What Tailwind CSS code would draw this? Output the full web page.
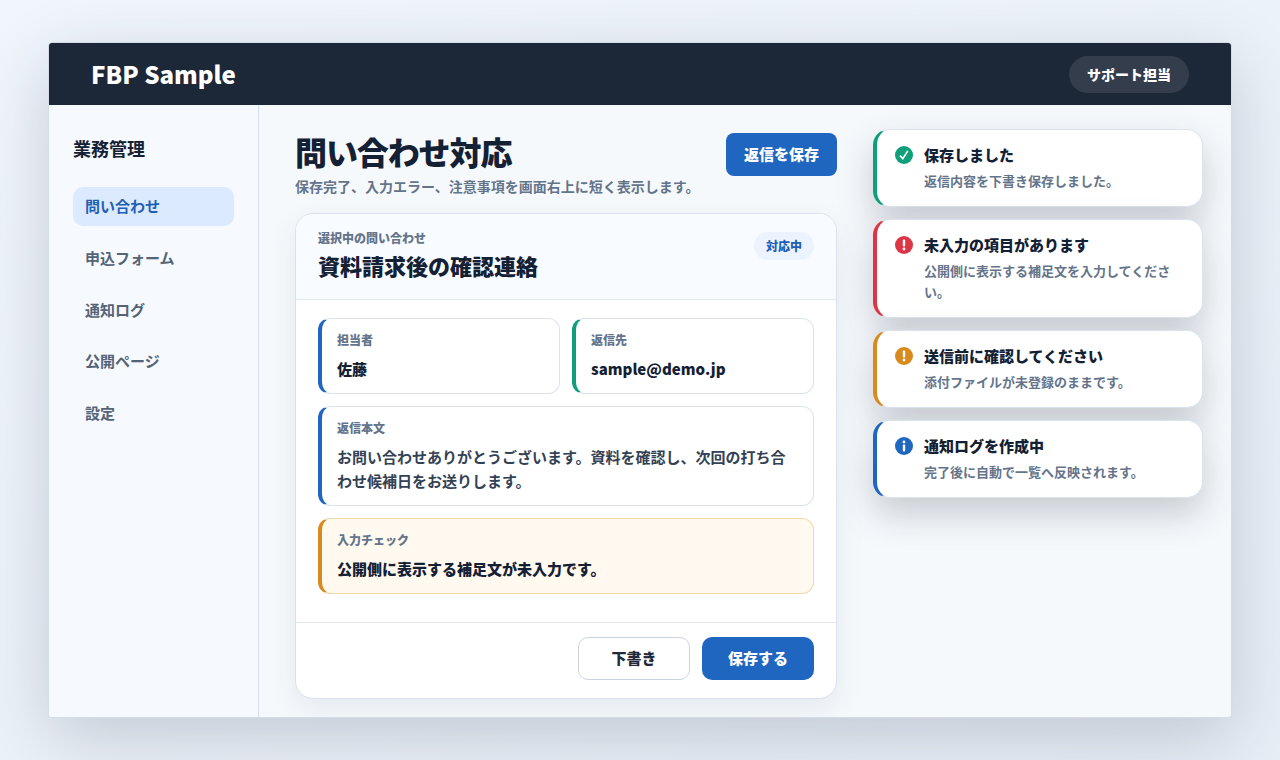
<!DOCTYPE html>
<html lang="ja">
<head>
    <meta charset="UTF-8">
    <meta name="viewport" content="width=device-width, initial-scale=1.0">
    <title>FBP Sample</title>
    <script src="https://cdn.jsdelivr.net/npm/@tailwindcss/browser@4"></script>
</head>
<body class="h-[760px] overflow-hidden bg-gradient-to-br from-[#f1f6fd] to-[#e8eef6] px-12 pt-[42px] font-['Noto_Sans_CJK_JP','Noto_Sans',sans-serif] text-[#142033]">

    <div class="flex h-[676px] flex-col overflow-hidden rounded-[4px] border border-[#d3dce8] bg-[#f6f9fc] shadow-[0_20px_70px_rgba(30,41,59,0.2)]">

        <!-- Header -->
        <header class="flex h-[62px] shrink-0 items-center justify-between bg-[#1c2837] pl-[42px] pr-[42px]">
            <div class="text-2xl font-extrabold leading-none text-white">FBP Sample</div>
            <div class="flex h-[37px] w-[120px] items-center justify-center rounded-full bg-[#333d4c] text-sm font-extrabold text-white">サポート担当</div>
        </header>

        <div class="flex min-h-0 flex-1">

            <!-- Sidebar -->
            <aside class="w-[210px] shrink-0 border-r border-[#d5dfeb] bg-[#f6f9fe] pl-6 pr-6 pt-[29px]">
                <div class="text-lg font-bold leading-[28px]">業務管理</div>
                <nav class="mt-[25px] flex flex-col gap-[12.75px] text-[15px] font-bold leading-6 text-[#556377]">
                    <a class="rounded-[10px] bg-[#dbeafe] px-3 pb-[8px] pt-[7px] text-[#1f5fb5]">問い合わせ</a>
                    <a class="px-3 pb-[8px] pt-[7px]">申込フォーム</a>
                    <a class="px-3 pb-[8px] pt-[7px]">通知ログ</a>
                    <a class="px-3 pb-[8px] pt-[7px]">公開ページ</a>
                    <a class="px-3 pb-[8px] pt-[7px]">設定</a>
                </nav>
            </aside>

            <main class="flex flex-1 gap-9 pl-9 pr-[28px] pt-6">

                <!-- Center column -->
                <section class="flex w-[542px] shrink-0 flex-col">
                    <div class="flex items-start justify-between">
                        <div>
                            <h1 class="text-[32px] font-extrabold leading-[44px] tracking-[-1.1px]">問い合わせ対応</h1>
                            <p class="mt-0.5 text-sm font-bold leading-[22px] text-[#64748b]">保存完了、入力エラー、注意事項を画面右上に短く表示します。</p>
                        </div>
                        <button class="mt-1 h-[43px] w-[111px] rounded-lg bg-[#1f66c1] text-[15px] font-extrabold text-white">返信を保存</button>
                    </div>

                    <div class="mt-4 flex h-[486px] flex-col overflow-hidden rounded-[18px] border border-[#d9e2ee] bg-white shadow-[0_10px_30px_rgba(30,41,59,0.08)]">
                        <div class="flex h-[86px] shrink-0 items-start justify-between border-b border-[#dfe7f1] bg-[#f8fbff] px-[22px] pt-[15px]">
                            <div>
                                <div class="text-xs font-extrabold leading-[18px] text-[#64748b]">選択中の問い合わせ</div>
                                <div class="mt-0.5 text-[22px] font-extrabold leading-[33px]">資料請求後の確認連絡</div>
                            </div>
                            <span class="mt-[3px] flex h-7 w-[60px] items-center justify-center rounded-full bg-[#ecf3fe] text-xs font-extrabold text-[#1f5fb5]">対応中</span>
                        </div>

                        <div class="flex flex-1 flex-col gap-3 px-[22px] pt-[18px]">
                            <div class="grid grid-cols-2 gap-3">
                                <div class="rounded-xl border border-l-4 border-[#d9e2ee] border-l-[#1f66c1] px-[15px] py-3">
                                    <div class="text-xs font-extrabold leading-[18px] text-[#64748b]">担当者</div>
                                    <div class="mt-2 text-[15px] font-extrabold leading-6">佐藤</div>
                                </div>
                                <div class="rounded-xl border border-l-4 border-[#d9e2ee] border-l-[#0f9f7a] px-[15px] py-3">
                                    <div class="text-xs font-extrabold leading-[18px] text-[#64748b]">返信先</div>
                                    <div class="mt-2 text-[15px] font-extrabold leading-6">sample@demo.jp</div>
                                </div>
                            </div>
                            <div class="rounded-xl border border-l-4 border-[#d9e2ee] border-l-[#1f66c1] px-[15px] py-3">
                                <div class="text-xs font-extrabold leading-[18px] text-[#64748b]">返信本文</div>
                                <div class="mt-2 text-[15px] font-bold leading-6 text-[#334155]">お問い合わせありがとうございます。資料を確認し、次回の打ち合わせ候補日をお送りします。</div>
                            </div>
                            <div class="rounded-xl border border-l-4 border-[#ecd8a8] border-l-[#d98a1f] bg-[#fff9ef] px-[15px] py-3">
                                <div class="text-xs font-extrabold leading-[18px] text-[#64748b]">入力チェック</div>
                                <div class="mt-2 text-[15px] font-extrabold leading-6">公開側に表示する補足文が未入力です。</div>
                            </div>
                        </div>

                        <div class="flex h-[76px] shrink-0 justify-end gap-3 border-t border-[#dfe7f1] px-[22px] pt-[14px]">
                            <button class="h-[43px] w-[112px] rounded-[10px] border border-[#cbd5e1] bg-white text-[15px] font-extrabold text-[#1f2a3c]">下書き</button>
                            <button class="h-[43px] w-[112px] rounded-[10px] bg-[#1f66c1] text-[15px] font-extrabold text-white">保存する</button>
                        </div>
                    </div>
                </section>

                <!-- Toasts -->
                <section class="flex flex-1 flex-col gap-3">
                    <div class="flex gap-[11px] rounded-2xl border border-l-4 border-[#dbe3ee] border-l-[#0f9f7a] bg-white pb-[14.2px] pl-[18px] pr-4 pt-[14px] shadow-[0_16px_36px_rgba(30,41,59,0.22)]">
                        <svg class="mt-[2px] h-[18px] w-[18px] shrink-0" viewBox="0 0 18 18"><circle cx="9" cy="9" r="9" fill="#0f9f7a"/><path d="M5 9.6 7.8 12.6 12.8 4.9" fill="none" stroke="#fff" stroke-width="1.7"/></svg>
                        <div>
                            <div class="text-[15px] font-extrabold leading-[22.5px]">保存しました</div>
                            <div class="mt-[4.5px] text-[13px] font-bold leading-[20.8px] text-[#64748b]">返信内容を下書き保存しました。</div>
                        </div>
                    </div>
                    <div class="flex gap-[11px] rounded-2xl border border-l-4 border-[#dbe3ee] border-l-[#dc3545] bg-white pb-[14.2px] pl-[18px] pr-4 pt-[14px] shadow-[0_16px_36px_rgba(30,41,59,0.22)]">
                        <svg class="mt-[2px] h-[18px] w-[18px] shrink-0" viewBox="0 0 18 18"><circle cx="9" cy="9" r="9" fill="#dc3545"/><rect x="7.8" y="3.6" width="2.4" height="7" rx="1" fill="#fff"/><circle cx="9" cy="13" r="1.4" fill="#fff"/></svg>
                        <div>
                            <div class="text-[15px] font-extrabold leading-[22.5px]">未入力の項目があります</div>
                            <div class="mt-[4.5px] text-[13px] font-bold leading-[20.8px] text-[#64748b]">公開側に表示する補足文を入力してください。</div>
                        </div>
                    </div>
                    <div class="flex gap-[11px] rounded-2xl border border-l-4 border-[#dbe3ee] border-l-[#d98a1f] bg-white pb-[14.2px] pl-[18px] pr-4 pt-[14px] shadow-[0_16px_36px_rgba(30,41,59,0.22)]">
                        <svg class="mt-[2px] h-[18px] w-[18px] shrink-0" viewBox="0 0 18 18"><circle cx="9" cy="9" r="9" fill="#d98a1f"/><rect x="7.8" y="3.6" width="2.4" height="7" rx="1" fill="#fff"/><circle cx="9" cy="13" r="1.4" fill="#fff"/></svg>
                        <div>
                            <div class="text-[15px] font-extrabold leading-[22.5px]">送信前に確認してください</div>
                            <div class="mt-[4.5px] text-[13px] font-bold leading-[20.8px] text-[#64748b]">添付ファイルが未登録のままです。</div>
                        </div>
                    </div>
                    <div class="flex gap-[11px] rounded-2xl border border-l-4 border-[#dbe3ee] border-l-[#1f66c1] bg-white pb-[14.2px] pl-[18px] pr-4 pt-[14px] shadow-[0_16px_36px_rgba(30,41,59,0.22)]">
                        <svg class="mt-[2px] h-[18px] w-[18px] shrink-0" viewBox="0 0 18 18"><circle cx="9" cy="9" r="9" fill="#1f66c1"/><circle cx="9" cy="5" r="1.4" fill="#fff"/><rect x="7.8" y="7.4" width="2.4" height="7" rx="1" fill="#fff"/></svg>
                        <div>
                            <div class="text-[15px] font-extrabold leading-[22.5px]">通知ログを作成中</div>
                            <div class="mt-[4.5px] text-[13px] font-bold leading-[20.8px] text-[#64748b]">完了後に自動で一覧へ反映されます。</div>
                        </div>
                    </div>
                </section>
            </main>
        </div>
    </div>

</body>
</html>
